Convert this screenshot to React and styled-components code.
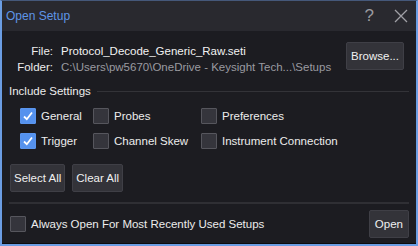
import React from "react";
import styled, { createGlobalStyle } from "styled-components";

const Global = createGlobalStyle`
  html, body { margin: 0; padding: 0; background: #1c1c21; }
  * { box-sizing: border-box; }
`;

const Window = styled.div`
  width: 418px;
  height: 246px;
  display: flex;
  flex-direction: column;
  background: #1c1c21;
  border: 2px solid #6b9de3;
  border-top: 1px solid #45587a;
  font-family: "Liberation Sans", Arial, sans-serif;
  font-size: 11.5px;
  color: #ececec;
`;

const TitleBar = styled.div`
  height: 30px;
  flex: none;
  background: #29292f;
  display: flex;
  align-items: center;
  padding: 0 8px 0 4px;
`;

const Title = styled.div`
  flex: 1;
  color: #5f95e6;
  font-size: 12px;
`;

const TitleIcon = styled.span`
  color: #9a9aa0;
  font-size: 17px;
  margin-left: ${(p) => p.$gap || 0}px;
  display: flex;
  align-items: center;
`;

const Body = styled.div`
  flex: 1;
  display: flex;
  flex-direction: column;
  padding: 11px 7px 0 7px;
  border-bottom: 1px solid #0c0c0e;
`;

const FileRow = styled.div`
  display: flex;
  align-items: flex-start;
`;

const FileGrid = styled.div`
  flex: 1;
  display: grid;
  grid-template-columns: 44px 1fr;
  column-gap: 8px;
  row-gap: 4px;
  padding-top: 3px;
`;

const Label = styled.div`
  text-align: right;
  color: #ececec;
`;

const Value = styled.div`
  color: ${(p) => (p.$dim ? "#9a9aa0" : "#f2f2f2")};
  white-space: nowrap;
`;

const Button = styled.button`
  font-family: inherit;
  font-size: 11.5px;
  color: #f0f0f0;
  background: #333339;
  border: 1px solid #3f3f46;
  border-radius: 2px;
  height: 28px;
  padding: 0 ${(p) => p.$pad || 3}px;
  margin-right: ${(p) => p.$mr || 0}px;
  cursor: pointer;
`;

const SectionHead = styled.div`
  display: flex;
  align-items: center;
  gap: 6px;
  margin-top: 12px;
  color: #ececec;
`;

const Rule = styled.div`
  flex: 1;
  height: 1px;
  background: #333338;
`;

const OptionGrid = styled.div`
  display: grid;
  grid-template-columns: 73px 108px auto;
  row-gap: 9px;
  padding: 11px 0 0 11px;
`;

const Option = styled.label`
  display: flex;
  align-items: center;
  gap: 5px;
  height: 16px;
  white-space: nowrap;
`;

const Box = styled.span`
  width: 16px;
  height: 16px;
  flex: none;
  display: flex;
  align-items: center;
  justify-content: center;
  background: ${(p) => (p.$on ? "#5592ee" : "#35353c")};
  border: 1px solid ${(p) => (p.$on ? "#5a95ee" : "#56565d")};
  border-radius: 1px;
`;

const ButtonRow = styled.div`
  display: flex;
  gap: 7px;
  padding: 15px 0 0 1px;
`;

const Divider = styled.div`
  height: 2px;
  background: #2f2f34;
  margin-top: 10px;
`;

const Footer = styled.div`
  display: flex;
  align-items: center;
  justify-content: space-between;
  padding: 6px 0 0 1px;
`;

function Check({ on, children }) {
  return (
    <Option>
      <Box $on={on}>
        {on && (
          <svg width="12" height="12" viewBox="0 0 12 12">
            <path d="M2 6.5 L4.8 9.2 L10 2.5" fill="none" stroke="#fff" strokeWidth="1.8" />
          </svg>
        )}
      </Box>
      {children}
    </Option>
  );
}

export default function App() {
  return (
    <>
      <Global />
      <Window>
        <TitleBar>
          <Title>Open Setup</Title>
          <TitleIcon>?</TitleIcon>
          <TitleIcon $gap={20}>
            <svg width="14" height="14" viewBox="0 0 14 14">
              <path d="M1 1 L13 13 M13 1 L1 13" stroke="#a0a0a6" strokeWidth="1.3" />
            </svg>
          </TitleIcon>
        </TitleBar>
        <Body>
          <FileRow>
            <FileGrid>
              <Label>File:</Label>
              <Value>Protocol_Decode_Generic_Raw.seti</Value>
              <Label>Folder:</Label>
              <Value $dim>C:\Users\pw5670\OneDrive - Keysight Tech...\Setups</Value>
            </FileGrid>
            <Button $pad={4} $mr={5}>Browse...</Button>
          </FileRow>
          <SectionHead>
            Include Settings
            <Rule />
          </SectionHead>
          <OptionGrid>
            <Check on>General</Check>
            <Check>Probes</Check>
            <Check>Preferences</Check>
            <Check on>Trigger</Check>
            <Check>Channel Skew</Check>
            <Check>Instrument Connection</Check>
          </OptionGrid>
          <ButtonRow>
            <Button>Select All</Button>
            <Button>Clear All</Button>
          </ButtonRow>
          <Divider />
          <Footer>
            <Check>Always Open For Most Recently Used Setups</Check>
            <Button $pad={5}>Open</Button>
          </Footer>
        </Body>
      </Window>
    </>
  );
}
